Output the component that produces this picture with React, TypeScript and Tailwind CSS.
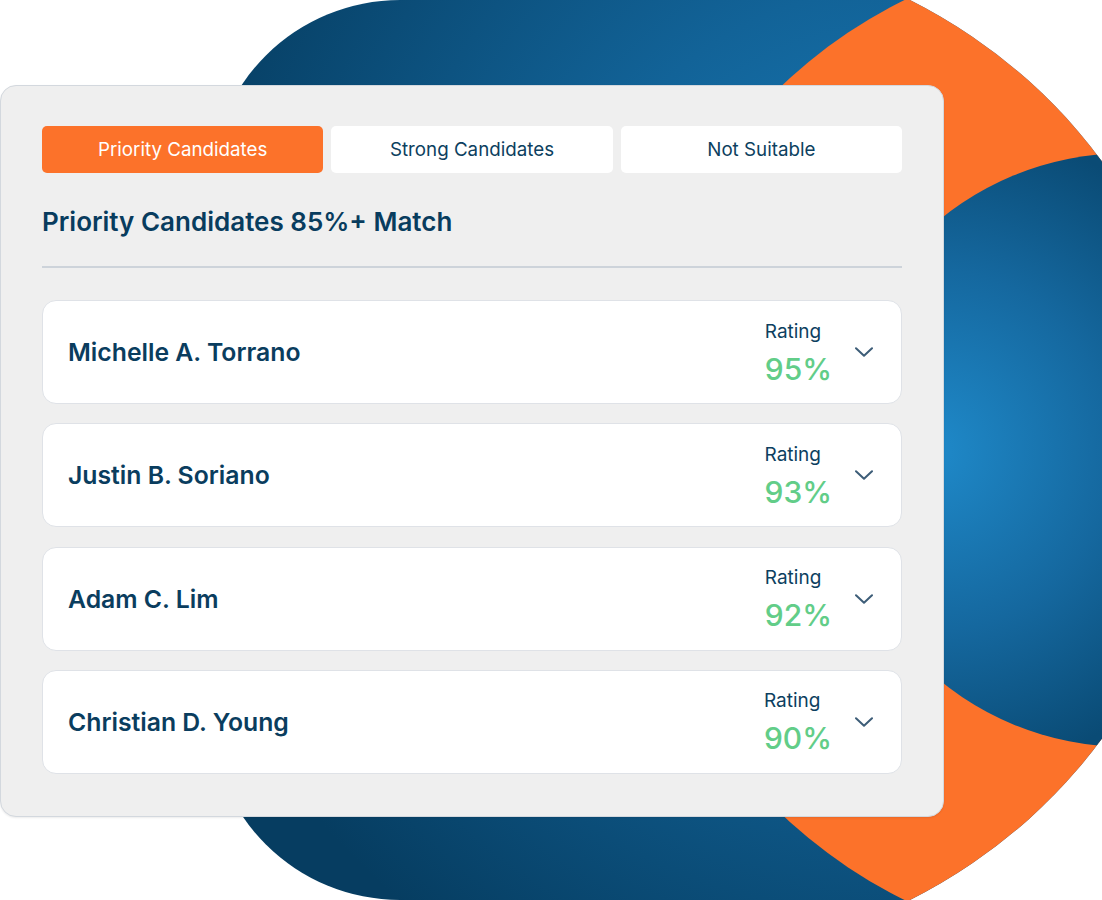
import React from "react";

const candidates = [
  { name: "Michelle A. Torrano", rating: "95%" },
  { name: "Justin B. Soriano", rating: "93%" },
  { name: "Adam C. Lim", rating: "92%" },
  { name: "Christian D. Young", rating: "90%" },
];

function Backdrop() {
  return (
    <svg
      className="absolute left-0 top-0"
      width="1102"
      height="900"
      viewBox="0 0 1102 900"
      aria-hidden="true"
    >
      <defs>
        <radialGradient id="blueA" gradientUnits="userSpaceOnUse" cx="900" cy="330" r="760">
          <stop offset="0" stopColor="#1a7fbd" />
          <stop offset="0.45" stopColor="#126398" />
          <stop offset="1" stopColor="#063d61" />
        </radialGradient>
        <radialGradient id="blueB" gradientUnits="userSpaceOnUse" cx="930" cy="450" r="330">
          <stop offset="0" stopColor="#1f8aca" />
          <stop offset="0.55" stopColor="#15689f" />
          <stop offset="1" stopColor="#0a4b75" />
        </radialGradient>
        <clipPath id="outer">
          <path d="M400 0 L910 0 A550 512 0 0 1 910 900 L400 900 A190 190 0 0 1 210 710 L210 190 A190 190 0 0 1 400 0 Z" />
        </clipPath>
      </defs>
      <g clipPath="url(#outer)">
        <rect x="0" y="0" width="1102" height="900" fill="url(#blueA)" />
        <circle cx="1127" cy="450" r="502" fill="#fc722a" />
        <circle cx="1127" cy="450" r="297" fill="url(#blueB)" />
      </g>
    </svg>
  );
}

function Chevron() {
  return (
    <svg width="18" height="10" viewBox="0 0 18 10" fill="none" aria-hidden="true">
      <path d="M1 1.2 L9 8.8 L17 1.2" stroke="#3d5d78" strokeWidth="2" strokeLinecap="round" strokeLinejoin="round" />
    </svg>
  );
}

export default function App() {
  return (
    <div
      className="relative w-[1102px] h-[900px] overflow-hidden bg-white"
      style={{ fontFamily: "Inter, 'Noto Sans', sans-serif" }}
    >
      <Backdrop />
      <div className="relative mt-[85px] w-[944px] h-[732px] rounded-[16px] border border-[#d3d8de] bg-[#efefef] px-[41px] pt-[40px] shadow-[0_1px_2px_rgba(0,0,0,0.08)]">
        <div className="grid grid-cols-3 gap-[8px]">
          <div className="h-[47px] pt-[2px] rounded-[5px] bg-[#fc722a] flex items-center justify-center text-[18.75px] text-white">
            Priority Candidates
          </div>
          <div className="h-[47px] pt-[2px] rounded-[5px] bg-white flex items-center justify-center text-[18.75px] text-[#0d3f60]">
            Strong Candidates
          </div>
          <div className="h-[47px] pt-[2px] rounded-[5px] bg-white flex items-center justify-center text-[18.75px] text-[#0d3f60]">
            Not Suitable
          </div>
        </div>
        <h2 className="mt-[33px] text-[26px] leading-[32px] font-semibold text-[#083c5e]">
          Priority Candidates 85%+ Match
        </h2>
        <div className="mt-[28px] h-[2px] bg-[#cdd3da]" />
        <div className="mt-[32px] flex flex-col gap-[19.33px]">
          {candidates.map((c) => (
            <div
              key={c.name}
              className="h-[104px] rounded-[14px] border border-[#dfe2e7] bg-white pl-[25px] pr-[28px] flex items-center justify-between"
            >
              <div className="pt-[1px] text-[24.75px] font-semibold text-[#0a3d5e]">{c.name}</div>
              <div className="flex items-center gap-[23px]">
                <div className="flex flex-col pt-[4px]">
                  <div className="text-[19px] leading-[24px] text-[#0d3f60]">Rating</div>
                  <div className="mt-[5px] text-[30px] leading-[40px] font-medium text-[#62cd88]">{c.rating}</div>
                </div>
                <Chevron />
              </div>
            </div>
          ))}
        </div>
      </div>
    </div>
  );
}
